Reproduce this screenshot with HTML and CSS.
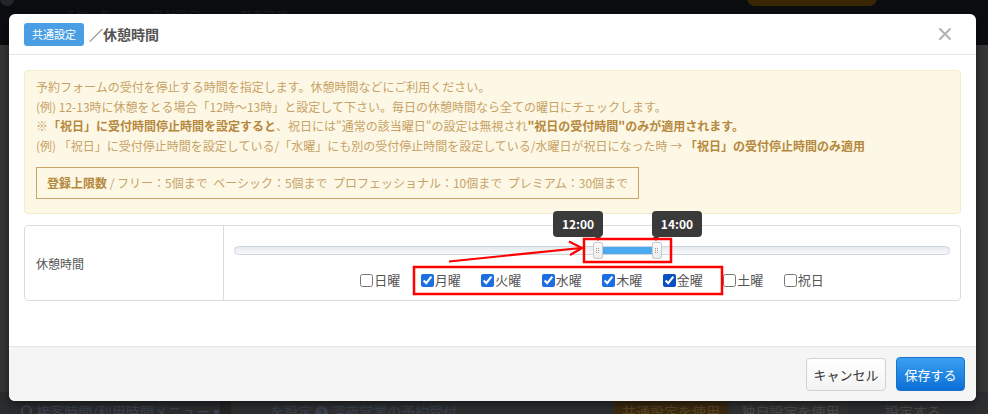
FILE: index.html
```html
<!DOCTYPE html>
<html lang="ja">
<head>
<meta charset="utf-8">
<title>休憩時間</title>
<link rel="stylesheet" href="styles.css">
</head>
<body>
<div class="page">
  <header class="topbar">
    <span class="top-dot"></span>
    <nav class="top-nav"><span>予約一覧</span><span>受付設定</span><span>顧客管理</span></nav>
    <span class="top-btn"></span>
  </header>
  <main class="page-main"></main>
  <div class="bottom-row">
    <div class="b-cell b-menu"><span class="b-clock"></span>接客時間/利用時間メニュー ▾</div>
    <div class="b-divider"></div>
    <div class="b-cell b-set">を設定 <span class="b-q">?</span> 深夜営業の予約受付</div>
    <div class="b-cell b-common">共通設定を使用</div>
    <div class="b-cell b-own">独自設定を使用</div>
    <div class="b-cell b-do">設定する</div>
  </div>
</div>

<div class="modal">
  <div class="modal-header">
    <span class="badge">共通設定</span>
    <h1 class="modal-title">／休憩時間</h1>
    <button class="close" aria-label="閉じる">
      <svg width="12" height="12" viewBox="0 0 12 12"><path d="M1 1L11 11M11 1L1 11" stroke="#b3b3b3" stroke-width="2" stroke-linecap="round"/></svg>
    </button>
  </div>
  <div class="modal-body">
    <div class="notice">
      <p>予約フォームの受付を停止する時間を指定します。休憩時間などにご利用ください。</p>
      <p>(例) 12-13時に休憩をとる場合「12時～13時」と設定して下さい。毎日の休憩時間なら全ての曜日にチェックします。</p>
      <p>※<b>「祝日」に受付時間停止時間を設定すると</b>、祝日には"通常の該当曜日"の設定は無視され<b>"祝日の受付時間"のみが適用されます。</b></p>
      <p>(例) 「祝日」に受付停止時間を設定している/「水曜」にも別の受付停止時間を設定している/水曜日が祝日になった時 → <b>「祝日」の受付停止時間のみ適用</b></p>
      <div class="limit"><b>登録上限数</b> / フリー：5個まで&nbsp; ベーシック：5個まで&nbsp; プロフェッショナル：10個まで&nbsp; プレミアム：30個まで</div>
    </div>
    <div class="form-table">
      <div class="form-label">休憩時間</div>
      <div class="form-field">
        <div class="slider">
          <div class="track">
            <div class="bar" style="left:51.4%;width:7.42%"></div>
            <span class="handle" style="left:50.14%"></span>
            <span class="handle" style="left:58.4%"></span>
            <span class="tip tip-left" style="left:44.54%">12:00</span>
            <span class="tip tip-right" style="left:58.4%">14:00</span>
          </div>
        </div>
        <div class="days">
          <label class="day"><input type="checkbox">日曜</label>
          <label class="day"><input type="checkbox" checked>月曜</label>
          <label class="day"><input type="checkbox" checked>火曜</label>
          <label class="day"><input type="checkbox" checked>水曜</label>
          <label class="day"><input type="checkbox" checked>木曜</label>
          <label class="day"><input type="checkbox" class="cb-focus" checked>金曜</label>
          <label class="day"><input type="checkbox">土曜</label>
          <label class="day"><input type="checkbox">祝日</label>
        </div>
      </div>
    </div>
  </div>
  <div class="modal-footer">
    <button class="btn btn-cancel">キャンセル</button>
    <button class="btn btn-save">保存する</button>
  </div>
</div>

<svg class="annot" width="988" height="414" viewBox="0 0 988 414">
  <rect x="584" y="239" width="87" height="23" fill="none" stroke="#f00" stroke-width="2.5"/>
  <rect x="414" y="267" width="308" height="27" fill="none" stroke="#f00" stroke-width="2.5"/>
  <line x1="449" y1="261.5" x2="581" y2="248" stroke="#f00" stroke-width="2.2"/>
  <polyline points="569,241.5 582,248 570,255" fill="none" stroke="#f00" stroke-width="2.2" stroke-linejoin="miter"/>
</svg>
</body>
</html>
```
FILE: styles.css
```css
* { box-sizing: border-box; }
html, body { margin: 0; padding: 0; }
body {
  width: 988px;
  height: 414px;
  overflow: hidden;
  position: relative;
  background: #363636;
  font-family: "Noto Sans CJK JP", "Noto Sans", sans-serif;
}
p { margin: 0; }

/* backdrop page */
.page { display: flex; flex-direction: column; height: 414px; }
.topbar {
  height: 45px;
  background: #0b0d10;
  display: flex;
  align-items: flex-start;
}
.top-dot {
  width: 14px; height: 14px; margin: -8px 0 0 0;
  border-radius: 50%; background: #22252a;
}
.top-nav {
  display: flex; gap: 40px; margin: 7px 0 0 50px;
  font-size: 12px; color: #1a1d22;
}
.top-btn {
  width: 130px; height: 26px; margin: -20px 111px 0 auto;
  background: #382605; border-radius: 8px;
}
.page-main { flex: 1; background: #363636; }
.bottom-row {
  height: 22px;
  display: flex;
  background: #2d2e30;
  font-size: 14px;
  line-height: 18px;
}
.b-cell { padding-top: 10px; white-space: nowrap; }
.b-menu { width: 220px; padding-left: 21px; color: #3a4350; background: #2b2c2e; display: flex; gap: 4px; }
.b-clock { width: 12px; height: 12px; border: 2px solid #3a4350; border-radius: 50%; margin-top: 3px; }
.b-divider { width: 11px; background: #232325; }
.b-set { width: 383px; padding-left: 39px; color: #38414d; }
.b-q {
  display: inline-block; width: 13px; height: 13px; border-radius: 50%;
  background: #38414d; color: #2d2e30; font-size: 10px; line-height: 13px; text-align: center; font-weight: bold;
}
.b-common { width: 114px; background: #3a2a10; color: #5a4522; text-align: center; }
.b-own { width: 115px; margin-left: 5px; background: #313131; color: #4a4a4a; text-align: center; }
.b-do { padding-left: 37px; color: #4a4a4a; }

/* modal */
.modal {
  position: absolute;
  left: 9px; top: 14px;
  width: 967px; height: 387px;
  background: #fff;
  border-radius: 6px;
  display: flex; flex-direction: column;
  overflow: hidden;
  box-shadow: 0 3px 10px rgba(0,0,0,0.5);
}
.modal-header {
  height: 41px;
  border-bottom: 1px solid #e5e5e5;
  display: flex; align-items: center;
  padding: 0 15px;
}
.badge {
  display: inline-block;
  height: 23px; padding: 0 8px;
  background: #4a9fe4; color: #fff;
  border-radius: 3px;
  font-size: 11px; line-height: 23px;
}
.modal-title {
  margin: 0 0 0 5px;
  font-size: 14px; font-weight: bold; color: #555;
}
.close {
  margin-left: auto; margin-right: 9px;
  width: 14px; height: 14px; padding: 0; border: 0; background: none;
  display: flex; align-items: center; justify-content: center;
}
.modal-body {
  flex: 1;
  padding: 15px 15px 0;
}
.notice {
  background: #fdf8e5;
  border: 1px solid #f5eacb;
  border-radius: 4px;
  padding: 6px 11px 14px;
  font-size: 12px;
  line-height: 19.5px;
  color: #c7a267;
}
.notice b { color: #b5883d; }
.limit {
  display: inline-block;
  margin-top: 12px;
  height: 32px;
  border: 1px solid #c9a468;
  padding: 0 10px;
  line-height: 30px;
  white-space: nowrap;
}
.form-table {
  margin-top: 11px;
  display: flex;
  border: 1px solid #dcdcdc;
  border-radius: 4px;
}
.form-label {
  width: 199px;
  border-right: 1px solid #dcdcdc;
  display: flex; align-items: center;
  padding-left: 11px;
  font-size: 12px; color: #555;
}
.form-field {
  flex: 1;
  padding: 20px 10px 11px;
}
.track {
  position: relative;
  height: 9px;
  border: 1px solid #cdd6df;
  border-radius: 5px;
  background: linear-gradient(#e6eaee, #f8f9fa);
}
.bar {
  position: absolute; top: 0; height: 100%;
  background: #4ba9ef;
}
.handle {
  position: absolute; top: -5px;
  width: 10px; height: 17px;
  background: linear-gradient(#fbfbfb, #ececec);
  border: 1px solid #c8c8c8;
  border-radius: 2px;
}
.handle::before {
  content: "";
  position: absolute; left: 2px; top: 5px;
  width: 1px; height: 1px;
  background: #999;
  box-shadow: 2px 0 #999, 0 2px #999, 2px 2px #999, 0 4px #999, 2px 4px #999;
}
.tip {
  position: absolute; top: -36px;
  width: 50px; height: 26px;
  background: #3a3a3a;
  border-radius: 4px;
  color: #fff;
  font-size: 12px; font-weight: bold;
  line-height: 26px; text-align: center;
}
.tip::after {
  content: "";
  position: absolute; bottom: -4px;
  border-left: 3px solid transparent;
  border-right: 3px solid transparent;
  border-top: 4px solid #3a3a3a;
}
.tip-left::after { right: 2px; }
.tip-right::after { left: 1px; }
.days {
  margin-top: 16px;
  display: flex; justify-content: center;
  gap: 20.5px;
  font-size: 13px; line-height: 18px; color: #555;
}
.day { display: flex; align-items: center; gap: 1px; }
.day input {
  margin: 0;
  width: 13px; height: 13px;
  accent-color: #1c6fe2;
}
.day input.cb-focus { accent-color: #0b50bf; }

.modal-footer {
  height: 55px;
  border-top: 1px solid #e5e5e5;
  background: #f5f5f5;
  display: flex; align-items: center; justify-content: flex-end;
  gap: 10px;
  padding-right: 11px;
}
.btn {
  font-family: inherit;
  font-size: 13px;
  border-radius: 4px;
  padding: 0;
  cursor: pointer;
}
.btn-cancel {
  width: 80px; height: 33px;
  border: 1px solid #d2d2d2;
  background: linear-gradient(#fff, #f3f3f3);
  color: #333;
}
.btn-save {
  width: 69px; height: 34px;
  border: 1px solid #1b72cc;
  background: linear-gradient(#3b9ff2, #0b6fd6);
  color: #fff;
}

.annot {
  position: absolute; left: 0; top: 0;
  pointer-events: none;
}
```
